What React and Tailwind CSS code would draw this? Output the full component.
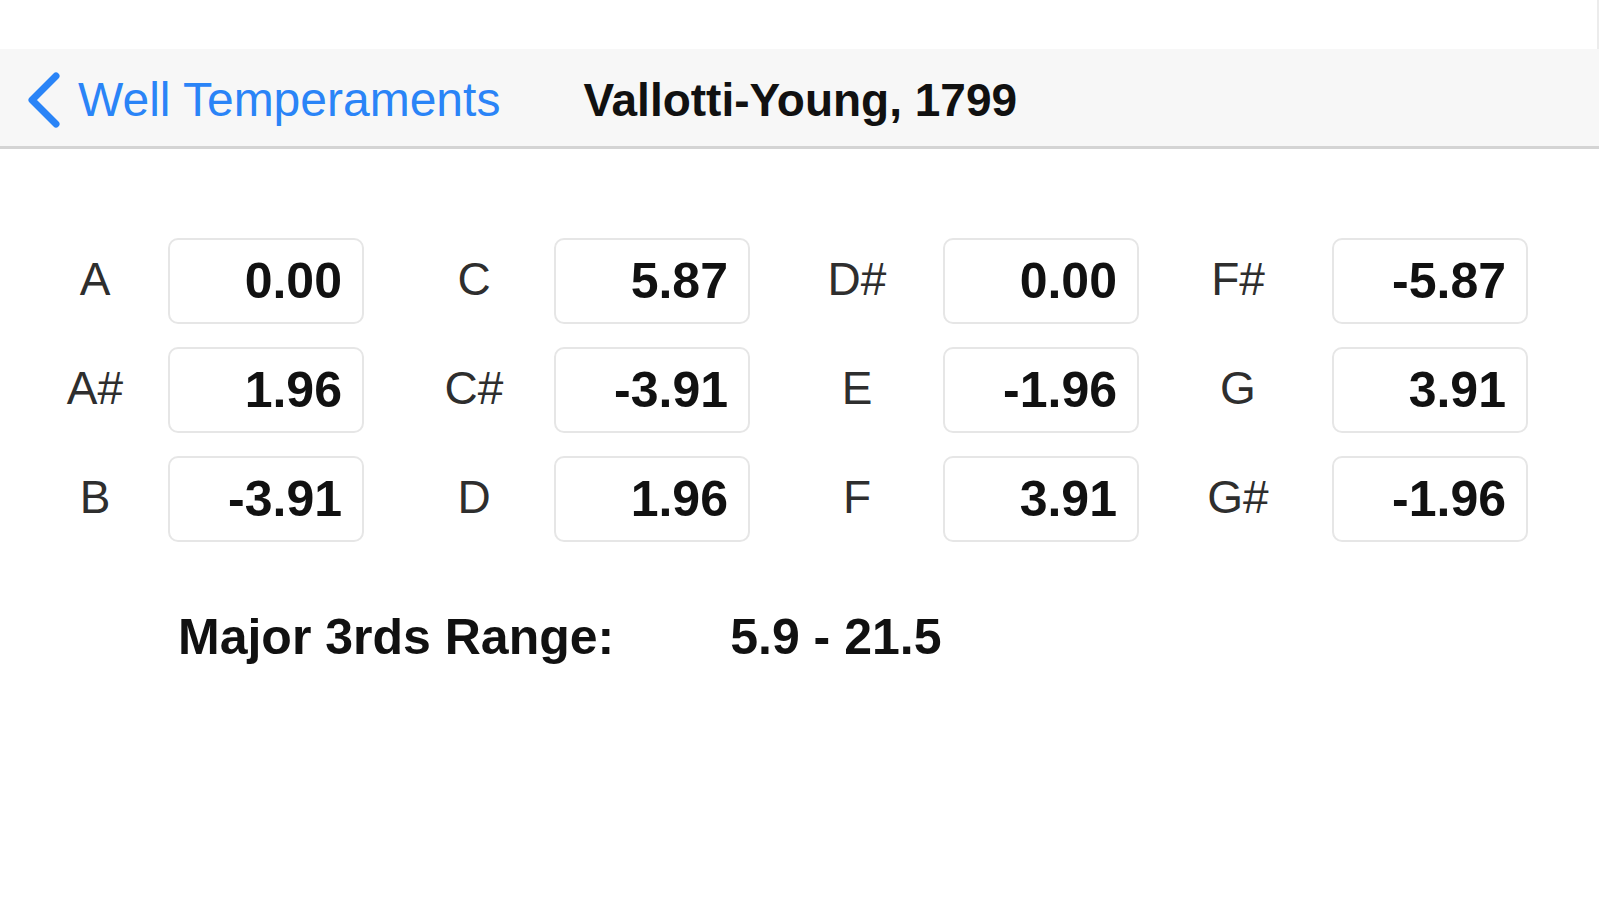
import React from "react";

const rows = [
  [
    ["A", "0.00"],
    ["C", "5.87"],
    ["D#", "0.00"],
    ["F#", "-5.87"],
  ],
  [
    ["A#", "1.96"],
    ["C#", "-3.91"],
    ["E", "-1.96"],
    ["G", "3.91"],
  ],
  [
    ["B", "-3.91"],
    ["D", "1.96"],
    ["F", "3.91"],
    ["G#", "-1.96"],
  ],
];

// label cells are centred a little differently in each column
const labelPad = ["pr-[18px]", "pl-[30px]", "pl-[21px]", "pl-[5px]"];

function Offset({ note, value, col }) {
  return (
    <>
      <div
        className={`flex items-center justify-center pb-[4px] text-[46px] leading-none text-[#2e2e2e] ${labelPad[col]}`}
      >
        {note}
      </div>
      <div className="flex h-[86px] items-center justify-end rounded-[10px] border-2 border-[#e6e6e6] bg-white pr-[20px] text-[50px] font-bold leading-none text-[#111]">
        {value}
      </div>
    </>
  );
}

export default function App() {
  return (
    <div
      className="h-[900px] w-[1599px] overflow-hidden bg-white"
      style={{ fontFamily: '"Liberation Sans", Arial, sans-serif' }}
    >
      {/* status bar area */}
      <div className="h-[49px] border-r-2 border-[#ececec]" />

      {/* navigation bar */}
      <div className="flex h-[100px] items-center border-b-[3px] border-[#d4d4d4] bg-[#f7f7f7] pt-[4px]">
        <div className="flex items-center pl-[25px] text-[#2a84f7]">
          <svg width="36" height="56" viewBox="0 0 36 56">
            <path
              d="M31 4 L7 28 L31 52"
              fill="none"
              stroke="currentColor"
              strokeWidth="7"
              strokeLinecap="round"
              strokeLinejoin="round"
            />
          </svg>
          <span className="ml-[17px] text-[48px] leading-none">
            Well Temperaments
          </span>
        </div>
        <div className="ml-[83px] text-[46px] font-bold leading-none text-[#111]">
          Vallotti-Young, 1799
        </div>
      </div>

      {/* offsets table */}
      <div className="pl-[40px] pt-[89px]">
        <div className="grid grid-cols-[128px_196px_190px_196px_193px_196px_193px_196px] gap-y-[23px]">
          {rows.map((row) =>
            row.map(([note, value], col) => (
              <Offset key={note} note={note} value={value} col={col} />
            ))
          )}
        </div>

        <div className="mt-[70px] flex items-center pl-[138px] text-[50px] font-bold leading-none text-[#111]">
          <span>Major 3rds Range:</span>
          <span className="ml-[116px]">5.9 - 21.5</span>
        </div>
      </div>
    </div>
  );
}
